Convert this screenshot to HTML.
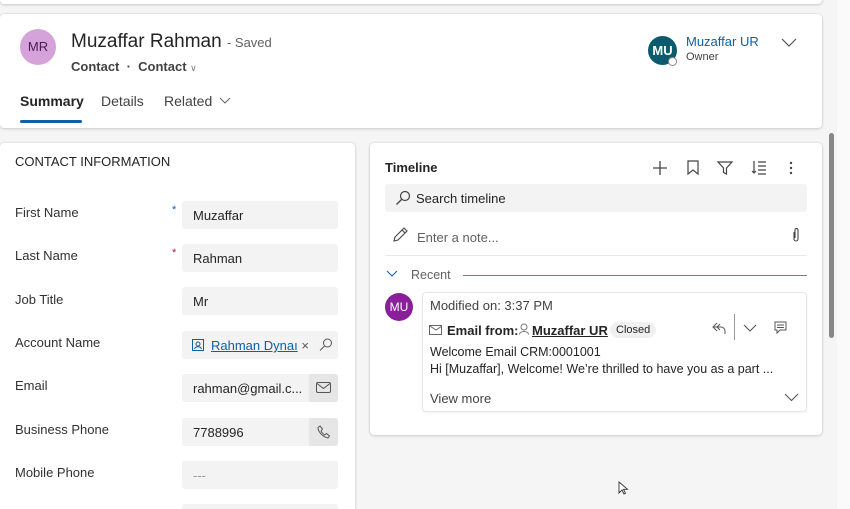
<!DOCTYPE html>
<html style="width:850px;height:509px;overflow:hidden"><head><meta charset="utf-8"><style>
*{box-sizing:border-box;margin:0;padding:0}
body{width:850px;height:509px;overflow:hidden;background:#f5f5f5;font-family:"Liberation Sans",sans-serif;color:#242424;position:relative}
.card{position:absolute;background:#fff;border-radius:4px;box-shadow:0 0 2px rgba(0,0,0,.12),0 1px 3px rgba(0,0,0,.14)}
.abs{position:absolute}
.lbl{position:absolute;left:15px;font-size:13px;color:#323130}
.inp{position:absolute;left:182px;width:156px;height:28px;background:#f3f3f3;border-radius:3px;font-size:13px;padding:7px 11px;color:#242424}
.btn{position:absolute;right:0;top:0;width:29px;height:28px;background:#e6e6e6;border-radius:0 3px 3px 0}
.star{position:absolute;left:172px;font-size:11px;color:#a4262c}
svg{position:absolute;overflow:visible}
</style></head><body>
<div class="card" style="left:0;top:-10px;width:822px;height:14px"></div>
<div class="card" style="left:0;top:14px;width:822px;height:114px">
  <div class="abs" style="left:20px;top:15px;width:36px;height:36px;border-radius:50%;background:#d5a3d9;color:#4a1b57;font-size:13px;text-align:center;line-height:36px">MR</div>
  <div class="abs" style="left:71px;top:17px;font-size:19px;color:#242424">Muzaffar Rahman <span style="font-size:13px;color:#616161">- Saved</span></div>
  <div class="abs" style="left:71px;top:45px;font-size:13px;font-weight:bold;color:#424242">Contact &nbsp;·&nbsp; Contact <span style="font-weight:normal;font-size:9px;color:#777">&#x2228;</span></div>
  <div class="abs" style="left:20px;top:79px;font-size:14px;font-weight:bold;color:#242424">Summary</div>
  <div class="abs" style="left:20px;top:106px;width:62px;height:3px;background:#115ea3;border-radius:2px"></div>
  <div class="abs" style="left:101px;top:79px;font-size:14px;color:#424242">Details</div>
  <div class="abs" style="left:164px;top:79px;font-size:14px;color:#424242">Related</div>
  <svg style="left:219px;top:83px" width="12" height="8"><path d="M1 1l5 5 5-5" fill="none" stroke="#666" stroke-width="1"/></svg>
  <div class="abs" style="left:648px;top:22px;width:29px;height:29px;border-radius:50%;background:#0b5a6e;color:#fff;font-size:13px;font-weight:bold;text-align:center;line-height:29px">MU</div>
  <div class="abs" style="left:668px;top:43px;width:9px;height:9px;border-radius:50%;background:#fff;border:1.5px solid #888"></div>
  <div class="abs" style="left:686px;top:20px;font-size:13px;color:#115ea3">Muzaffar UR</div>
  <div class="abs" style="left:686px;top:37px;font-size:11px;color:#424242">Owner</div>
  <svg style="left:781px;top:24px" width="16" height="10"><path d="M1 1l7 7 7-7" fill="none" stroke="#555" stroke-width="1.2"/></svg>
</div>
<div class="card" style="left:0;top:143px;width:355px;height:380px">
  <div class="abs" style="left:15px;top:11px;font-size:13px;color:#242424">CONTACT INFORMATION</div>
</div>
<div class="lbl" style="top:205px">First Name</div><div class="star" style="top:204px;color:#115ea3">*</div>
<div class="inp" style="top:201px">Muzaffar</div>
<div class="lbl" style="top:248px">Last Name</div><div class="star" style="top:247px">*</div>
<div class="inp" style="top:244px">Rahman</div>
<div class="lbl" style="top:292px">Job Title</div>
<div class="inp" style="top:287px">Mr</div>
<div class="lbl" style="top:335px">Account Name</div>
<div class="inp" style="top:331px;padding-left:29px;color:#115ea3"><span style="text-decoration:underline">Rahman Dynaı</span> <span style="color:#555">×</span>
 <svg style="left:10px;top:8px" width="12" height="12"><rect x="0.5" y="0.5" width="11" height="11" fill="none" stroke="#115ea3"/><circle cx="6" cy="5" r="2" fill="none" stroke="#115ea3"/><path d="M2.5 10c1-3 6-3 7 0" fill="none" stroke="#115ea3"/></svg>
 <svg style="left:137px;top:7px" width="14" height="14"><circle cx="8.5" cy="5" r="4" fill="none" stroke="#555"/><path d="M5.5 8l-4.5 4.5" stroke="#555"/></svg></div>
<div class="lbl" style="top:378px">Email</div>
<div class="inp" style="top:374px">rahman@gmail.c...<div class="btn"><svg style="left:7px;top:8px" width="15" height="11"><rect x="0.5" y="0.5" width="14" height="10" rx="1.5" fill="none" stroke="#555"/><path d="M1 1.5l6.5 5 6.5-5" fill="none" stroke="#555"/></svg></div></div>
<div class="lbl" style="top:422px">Business Phone</div>
<div class="inp" style="top:418px">7788996<div class="btn"><svg style="left:8px;top:7px" width="13" height="14"><path d="M3 1l2.5 3-1.5 2c1 2 2 3 3.5 4l2-1.5 3 2.5-1.5 2C6 12 1 7 1 2.5z" fill="none" stroke="#555"/></svg></div></div>
<div class="lbl" style="top:465px">Mobile Phone</div>
<div class="inp" style="top:461px;color:#999">---</div>
<div class="inp" style="top:504px;height:5px"></div>
<div class="card" style="left:370px;top:143px;width:452px;height:292px">
  <div class="abs" style="left:15px;top:17px;font-size:13px;font-weight:bold;color:#242424">Timeline</div>
  <svg style="left:282px;top:17px" width="16" height="16"><path d="M8 1v14M1 8h14" stroke="#444" stroke-width="1.3"/></svg>
  <svg style="left:317px;top:17px" width="12" height="15"><path d="M1 1h10v13l-5-4-5 4z" fill="none" stroke="#444" stroke-width="1.2"/></svg>
  <svg style="left:347px;top:18px" width="16" height="14"><path d="M1 1h14l-5.5 6v6l-3-1.5V7z" fill="none" stroke="#444" stroke-width="1.2"/></svg>
  <svg style="left:381px;top:17px" width="16" height="15"><path d="M3 1v12M1 11l2 2 2-2M7 2h8M7 6h8M7 10h8M7 14h8" fill="none" stroke="#444" stroke-width="1.2"/></svg>
  <svg style="left:419px;top:18px" width="4" height="14"><circle cx="2" cy="2" r="1.2" fill="#444"/><circle cx="2" cy="7" r="1.2" fill="#444"/><circle cx="2" cy="12" r="1.2" fill="#444"/></svg>
  <div class="abs" style="left:15px;top:41px;width:422px;height:28px;background:#f3f3f3;border-radius:3px"></div>
  <svg style="left:25px;top:47px" width="16" height="16"><circle cx="10" cy="6" r="4.5" fill="none" stroke="#444" stroke-width="1.2"/><path d="M6.5 9.5L1.5 14.5" stroke="#444" stroke-width="1.3"/></svg>
  <div class="abs" style="left:46px;top:48px;font-size:13px;color:#242424">Search timeline</div>
  <svg style="left:22px;top:84px" width="16" height="16"><path d="M2 14l1-4 9-9 3 3-9 9z M10 3l3 3" fill="none" stroke="#444" stroke-width="1.1"/></svg>
  <div class="abs" style="left:47px;top:87px;font-size:13px;color:#616161">Enter a note...</div>
  <svg style="left:422px;top:84px" width="8" height="16"><path d="M2 5v7a2 2 0 004 0V3a1.5 1.5 0 00-3 0v8" fill="none" stroke="#444" stroke-width="1.1"/></svg>
  <div class="abs" style="left:15px;top:112px;width:422px;height:1px;background:#e8e8e8"></div>
  <svg style="left:16px;top:127px" width="12" height="8"><path d="M1 1l5 5 5-5" fill="none" stroke="#115ea3" stroke-width="1"/></svg>
  <div class="abs" style="left:41px;top:125px;font-size:12.5px;color:#616161">Recent</div>
  <div class="abs" style="left:93px;top:132px;width:344px;height:1px;background:#4a8f9c"></div>
  <div class="abs" style="left:15px;top:150px;width:28px;height:28px;border-radius:50%;background:#8a1f9a;color:#fff;font-size:12px;text-align:center;line-height:28px">MU</div>
  <div class="abs" style="left:52px;top:149px;width:385px;height:120px;border:1px solid #e6e6e6;border-radius:4px;box-shadow:0 1px 2px rgba(0,0,0,.06)"></div>
  <div class="abs" style="left:60px;top:155px;font-size:13px;color:#424242">Modified on: 3:37 PM</div>
  <svg style="left:59px;top:182px" width="13" height="10"><rect x="0.5" y="0.5" width="12" height="9" fill="none" stroke="#666"/><path d="M1 1l6 4 6-4" fill="none" stroke="#666"/></svg>
  <div class="abs" style="left:77px;top:180px;font-size:13px;font-weight:bold;color:#242424">Email from:</div>
  <svg style="left:149px;top:180px" width="10" height="12"><circle cx="5" cy="4" r="3" fill="none" stroke="#777"/><path d="M0.5 11.5c0-4 9-4 9 0" fill="none" stroke="#777"/></svg>
  <div class="abs" style="left:162px;top:180px;font-size:13px;font-weight:bold;text-decoration:underline;color:#242424">Muzaffar UR</div>
  <div class="abs" style="left:240px;top:179px;height:16px;padding:0 6px;border-radius:8px;background:#f0f0f0;font-size:11px;line-height:16px;color:#242424">Closed</div>
  <svg style="left:342px;top:179px" width="14" height="13"><path d="M5 1L1 5l4 4M1 5h8a4 4 0 014 4v3M8 2L5 5l3 3" fill="none" stroke="#555" stroke-width="1"/></svg>
  <div class="abs" style="left:364px;top:171px;width:1px;height:26px;background:#999"></div>
  <svg style="left:373px;top:181px" width="14" height="8"><path d="M1 1l6 6 6-6" fill="none" stroke="#555" stroke-width="1.1"/></svg>
  <svg style="left:404px;top:178px" width="13" height="13"><path d="M1 1h11v8H6l-3 3V9H1z M3 4h7M3 6.5h7" fill="none" stroke="#555"/></svg>
  <div class="abs" style="left:60px;top:202px;font-size:12.5px;color:#242424">Welcome Email CRM:0001001</div>
  <div class="abs" style="left:60px;top:219px;font-size:12.5px;color:#242424;white-space:nowrap">Hi [Muzaffar], Welcome! We’re thrilled to have you as a part ...</div>
  <div class="abs" style="left:60px;top:248px;font-size:13px;color:#424242">View more</div>
  <svg style="left:414px;top:250px" width="15" height="9"><path d="M1 1l6.5 6.5 6.5-6.5" fill="none" stroke="#555" stroke-width="1.1"/></svg>
</div>
<div class="abs" style="left:837px;top:0;width:13px;height:509px;background:#fafafa"></div>
<div class="abs" style="left:829px;top:133px;width:5px;height:205px;background:#888;border-radius:3px"></div>
<svg style="left:618px;top:481px" width="10" height="15"><path d="M1 1v11l3-3 2 4 1.5-.7-2-4h4z" fill="#fff" stroke="#333" stroke-width="0.9"/></svg>
</body></html>
